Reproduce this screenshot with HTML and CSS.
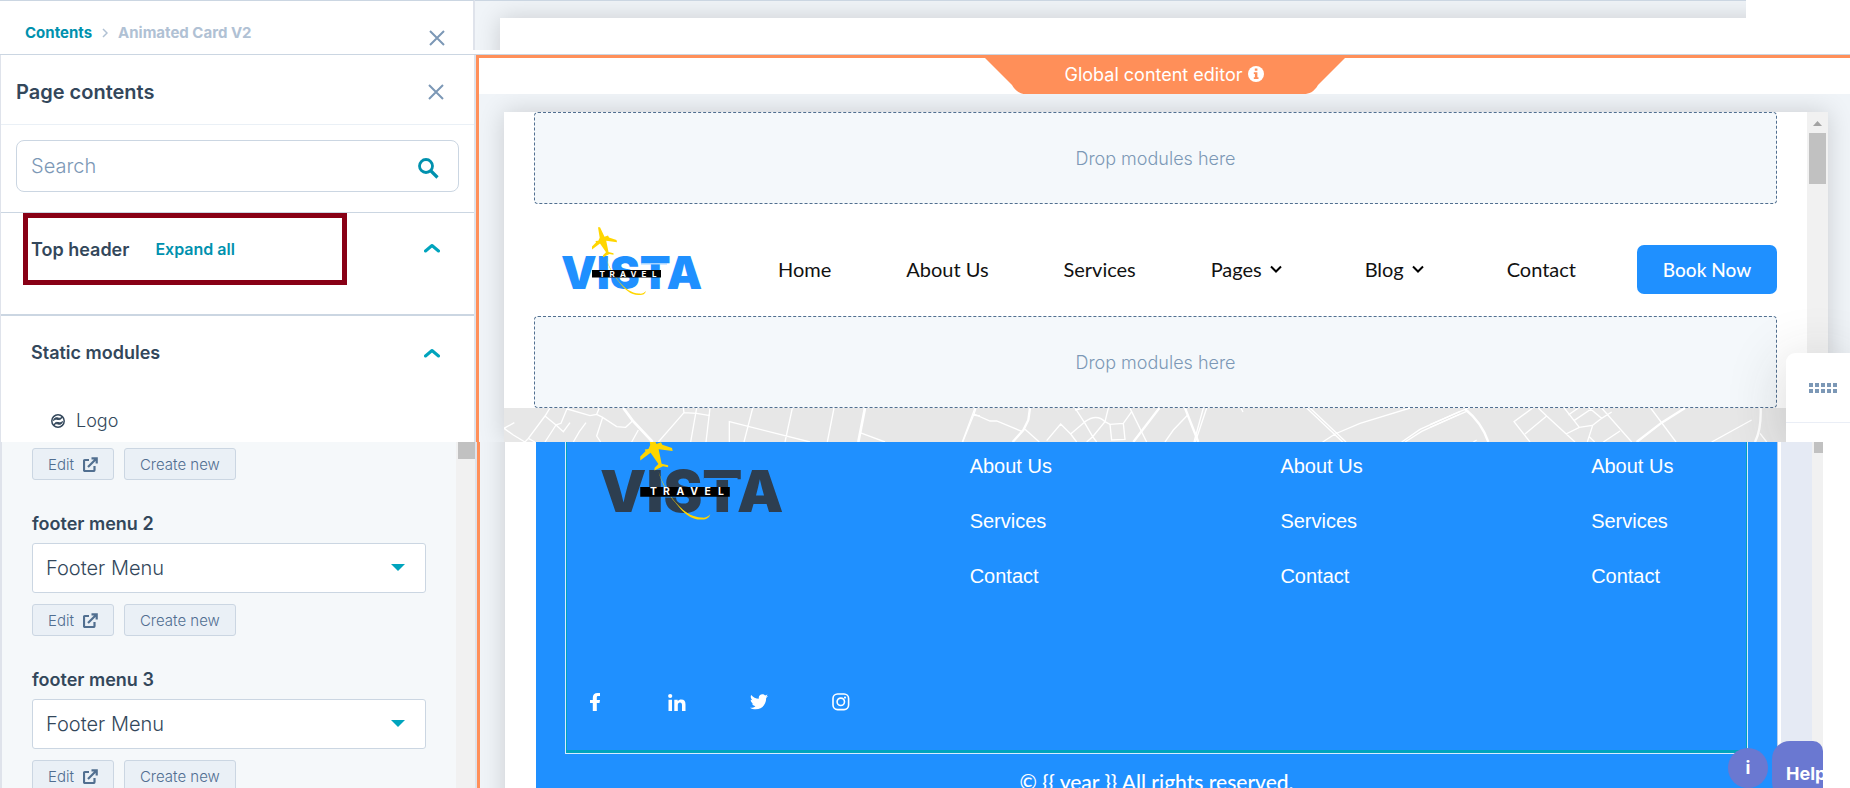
FILE: index.html
```html
<!DOCTYPE html>
<html lang="en">
<head>
<meta charset="utf-8">
<title>Global content editor</title>
<link rel="stylesheet" href="styles.css">
</head>
<body>
<svg class="defs" aria-hidden="true">
  <symbol id="close" viewBox="0 0 16 16"><path d="M1 1l14 14M15 1L1 15" stroke="#7c98b6" stroke-width="2" fill="none"/></symbol>
  <symbol id="up" viewBox="0 0 16 10"><path d="M1.500 8L8 2.500 14.500 8" stroke="#00a4bd" stroke-width="3" stroke-linecap="round" stroke-linejoin="round" fill="none"/></symbol>
  <symbol id="down" viewBox="0 0 12 8"><path d="M1 1.500l5 5 5-5" stroke="#000" stroke-width="2" fill="none"/></symbol>
  <symbol id="external" viewBox="0 0 15 15"><path d="M6 3H2a1 1 0 0 0-1 1v9a1 1 0 0 0 1 1h8.500a1 1 0 0 0 1-1V9M5 10L13 2M8.500 1.300h5.200v5.200" stroke="#516f90" stroke-width="2.200" fill="none"/></symbol>
  <symbol id="plane" viewBox="0 0 141 69">
    <path d="M45 31c3 10 7 17 13 24 6 8 13 14 21 13 3 0 5-1 6-4-2 2-4 3-7 2.500-8-.5-14-5-20-12-6-7-10-15-13-23.500z" fill="#ffd600"/>
    <path d="M37 .3h2L43.500 9.800l3.500-1.300 1 2 7.500 2.500.5 2.300-10.800-1.500L47.500 25l5 1.300v1.400l-4-.7-5 2.500-1.500.8v-2l3-3L39 16.500l-8 6v-3l4-4-.5-1.500 2.800-.3 1.400-3z" fill="#ffd600"/>
    <path d="M31 43h69v7.500H31z" fill="#000"/>
  </symbol>
</svg>

<section class="strip">
  <div class="crumb-panel">
    <nav class="crumbs" aria-label="Breadcrumb">
      <a href="#">Contents</a>
      <svg width="6" height="10" viewBox="0 0 6 10"><path d="M1 1l4 4-4 4" stroke="#b0c1d4" stroke-width="1.500" fill="none"/></svg>
      <span>Animated Card V2</span>
    </nav>
    <button class="icon-btn" aria-label="Close"><svg width="16" height="16"><use href="#close"/></svg></button>
  </div>
  <div class="strip-canvas"><div class="strip-page"></div></div>
</section>

<section class="editor">
  <aside class="panel">
    <header class="panel-head">
      <h1>Page contents</h1>
      <button class="icon-btn" aria-label="Close panel"><svg width="16" height="16"><use href="#close"/></svg></button>
    </header>
    <div class="search-row">
      <label class="search">
        <input type="text" placeholder="Search" aria-label="Search">
        <svg width="21" height="21" viewBox="0 0 21 21"><circle cx="8" cy="8" r="6.500" stroke="#0091ae" stroke-width="2.800" fill="none"/><path d="M13 13l6.500 6.500" stroke="#0091ae" stroke-width="3.200"/></svg>
      </label>
    </div>
    <div class="group">
      <div class="marked"><h2>Top header</h2><a href="#">Expand all</a></div>
      <button class="icon-btn" aria-label="Collapse top header"><svg width="16" height="10"><use href="#up"/></svg></button>
    </div>
    <div class="static">
      <div class="static-head">
        <h2>Static modules</h2>
        <button class="icon-btn" aria-label="Collapse static modules"><svg width="16" height="10"><use href="#up"/></svg></button>
      </div>
      <div class="module">
        <svg width="14" height="14" viewBox="0 0 14 14"><circle cx="7" cy="7" r="6.200" stroke="#33475b" stroke-width="1.500" fill="none"/><path d="M2.500 6.500C3 4 5 3.200 7 4c1.500.6 3 .2 4-1-.5 2-2 3-4 2.500-2-.5-3-.2-4.500 1zM11.500 7.500c-.5 2.500-2.500 3.300-4.500 2.500-1.500-.6-3-.2-4 1 .5-2 2-3 4-2.500 2 .5 3 .2 4.500-1z" fill="#33475b" stroke="#33475b"/></svg>
        <span>Logo</span>
      </div>
    </div>
  </aside>

  <div class="stage">
    <div class="toolbar">
      <div class="tab">
        <svg class="tab-shape" viewBox="0 0 360 36"><path d="M0 0h360L333 27c-4 7-9 9-14 9H41c-5 0-10-2-14-9z" fill="#ff8f59"/></svg>
        <span>Global content editor</span>
        <svg width="16" height="16" viewBox="0 0 16 16"><circle cx="8" cy="8" r="8" fill="#fff"/><path d="M6.800 2.500h2.600v2.300H6.800zM5.800 6.300h3.600v5h1.100V13H5.800v-1.700h1.100V8H5.800z" fill="#ff8f59"/></svg>
      </div>
    </div>
    <div class="canvas">
      <div class="page">
        <div class="page-body">
          <div class="drop">Drop modules here</div>
          <div class="site-head">
            <svg class="logo" viewBox="0 0 141 69" role="img" aria-label="Vista Travel">
              <text class="vista-word" x="0" y="62">VISTA</text>
              <path d="M80 36h26v1.500H80z" fill="#a5d3ff"/>
              <use href="#plane"/>
              <text class="travel-word" x="38.500 48.500 59 69.500 80.500 91" y="49.500">TRAVEL</text>
            </svg>
            <nav class="menu" aria-label="Site">
              <a href="#">Home</a><a href="#">About Us</a><a href="#">Services</a>
              <a href="#" class="has-sub">Pages <svg width="12" height="8"><use href="#down"/></svg></a>
              <a href="#" class="has-sub">Blog <svg width="12" height="8"><use href="#down"/></svg></a>
              <a href="#">Contact</a>
            </nav>
            <button class="book">Book Now</button>
          </div>
          <div class="drop">Drop modules here</div>
          <svg class="map" viewBox="0 0 1303 34" preserveAspectRatio="xMinYMin slice" aria-hidden="true">
            <g fill="none" stroke="#fff" stroke-width="4">
              <g transform="translate(-24 -108) scale(.33333)">
                <path d="M103 368L72 385l28 20 35 21M210 324l-15 24-50 67-10 11M145 415l20 11M195 348l33 27 22 20 20-27M228 375l-33 51M228 375l15-5 19-46M262 327l68 20 20-4 8-19M350 343l18 9 42 28 27 2 21-20M368 352l-18 56 12 18M318 368l-20 27-18 31M475 390l-20 36M610 324l2 14-77 88M612 338l38 2 40 7M650 324l-18 102M690 324l-12 102M748 426v-61l242 61M818 324l-26 102M937 324l-22 102M1062 324l-20 102M1140 398l75 28M1485 324l-38 102M1480 345l20 3"/>
                <path stroke-width="8" d="M430 324l28 38 60 64M1155 324l-20 102"/>
              </g>
              <g transform="translate(456 -18) scale(.33333)">
                <path d="M48 54l-6 18L8 156M42 72l48 21h20l75 31M195 118l43 38M260 152l42-50 30 30 18 24M332 132l43-37q35-25 60 0l15 8 40-3 25-35-5-11M345 54l30 46 23 40 12 16M445 54l-10 41-37 45-18 16M345 60l25-6M450 103l5 47 40-2-5-48M515 65l45 91M683 75l-43 45-25 36M740 54l-34 102M730 54l-28 102M1040 54l108 102M1050 54l108 102M1088 156l37-24 75-32 150-46M1325 156l55-38 120-54M1335 156l50-32 115-52M843 54l6 12"/>
                <path stroke-width="7" d="M210 54l-5 36-15 30-32 36M598 54l-78 102M675 54l40 102"/>
              </g>
              <g transform="translate(926 -108) scale(.33333)">
                <path d="M0 374l115-50M0 382l115-50M130 426l10-6M308 324l-56 41 48 61M325 324l25 24 85 78M350 348l-65 54M403 324l45 58 40-6-16 50M448 382l-40 20M432 362l56-38M415 345l30-21M478 324l37 31 30-19M515 324l90 102M488 376l27-21M570 393l-50 33M662 324l76 102M845 426l120-66M990 400l20 26M478 410l16 16"/>
                <path stroke-width="7" d="M105 327q50 40 70 99M765 324l-70 44-75 58M992 324q2 65-17 102"/>
              </g>
            </g>
          </svg>
        </div>
        <div class="track">
          <svg width="21" height="21" viewBox="0 0 21 21"><path d="M6 14l4.500-5 4.500 5z" fill="#a3a3a3"/></svg>
          <div class="thumb"></div>
        </div>
      </div>
      <div class="dock">
        <button class="dock-btn" aria-label="Drag handle"><svg width="28" height="10" viewBox="0 0 28 10"><path d="M0 2h28M0 8h28" stroke="#7c98b6" stroke-width="4" stroke-dasharray="4 2"/></svg></button>
      </div>
    </div>
  </div>
</section>

<section class="lower">
  <aside class="fields">
    <div class="fields-body">
      <div class="actions"><button>Edit <svg width="15" height="15"><use href="#external"/></svg></button><button>Create new</button></div>
      <div class="field">
        <label for="menu2">footer menu 2</label>
        <div class="select"><select id="menu2"><option>Footer Menu</option></select><svg width="14" height="7" viewBox="0 0 14 7"><path d="M0 0h14L7 7z" fill="#00a4bd"/></svg></div>
        <div class="actions"><button>Edit <svg width="15" height="15"><use href="#external"/></svg></button><button>Create new</button></div>
      </div>
      <div class="field">
        <label for="menu3">footer menu 3</label>
        <div class="select"><select id="menu3"><option>Footer Menu</option></select><svg width="14" height="7" viewBox="0 0 14 7"><path d="M0 0h14L7 7z" fill="#00a4bd"/></svg></div>
        <div class="actions"><button>Edit <svg width="15" height="15"><use href="#external"/></svg></button><button>Create new</button></div>
      </div>
    </div>
    <div class="fields-track"><div class="thumb"></div></div>
  </aside>
  <div class="lower-stage">
    <div class="lower-page">
      <footer class="site-foot">
        <div class="foot-box">
          <div class="foot-cols">
            <svg class="logo-big" viewBox="0 0 141 69" role="img" aria-label="Vista Travel">
              <text class="vista-word" x="0" y="62">VISTA</text>
              <path d="M80 36h26v1.500H80z" fill="#1f90ff"/>
              <use href="#plane"/>
              <text class="travel-word" x="38.500 48.500 59 69.500 80.500 91" y="49.500">TRAVEL</text>
            </svg>
            <nav aria-label="Footer 1"><a href="#">About Us</a><a href="#">Services</a><a href="#">Contact</a></nav>
            <nav aria-label="Footer 2"><a href="#">About Us</a><a href="#">Services</a><a href="#">Contact</a></nav>
            <nav aria-label="Footer 3"><a href="#">About Us</a><a href="#">Services</a><a href="#">Contact</a></nav>
          </div>
          <div class="social">
            <a href="#" aria-label="Facebook"><svg viewBox="0 0 20 20"><path d="M7.800 19v-8H5V8h2.800V6C7.800 2.500 9.500 1 12.500 1H15v3h-1.800C12 4 11.800 4.700 11.800 5.700V8H15l-.5 3h-2.700v8z"/></svg></a>
            <a href="#" aria-label="LinkedIn"><svg viewBox="0 0 20 20"><circle cx="3.200" cy="4" r="2.100"/><path d="M1.500 7.700H5V19H1.500zM7.300 7.700h3.400v1.500c.8-1.200 2-1.800 3.600-1.800 3 0 4.200 1.800 4.200 5V19H15v-6c0-1.700-.6-2.600-2-2.600s-2.200 1-2.200 2.700V19H7.300z"/></svg></a>
            <a href="#" aria-label="Twitter"><svg viewBox="0 0 512 512"><path d="M459 152c0 4 .3 9 .3 14 0 139-106 299-299 299-59 0-115-17-161-47 8 1 16 1 25 1 49 0 94-17 130-45-46-1-85-31-98-73 7 1 13 2 20 2 9 0 19-1 28-4-48-10-84-52-84-103v-1c14 8 30 13 47 13C39 178 21 145 21 108c0-20 5-38 14-53 52 64 129 105 216 110-2-8-3-16-3-24 0-58 47-105 105-105 30 0 58 13 77 33 24-5 46-13 67-25-8 24-24 45-46 58 21-2 42-8 60-16-14 21-32 39-52 54z"/></svg></a>
            <a href="#" aria-label="Instagram"><svg viewBox="0 0 20 20"><g fill="none" stroke="#fff" stroke-width="1.600"><rect x="2" y="2" width="15.600" height="15.600" rx="4.500"/><circle cx="9.800" cy="9.800" r="3.700"/></g><circle cx="14" cy="5.600" r="1.100"/></svg></a>
          </div>
        </div>
        <p>© {{ year }} All rights reserved.</p>
      </footer>
    </div>
    <div class="gutter"></div>
    <div class="lower-track"><div class="thumb"></div></div>
    <div class="helpers"><button class="info">i</button><button class="help">Help</button></div>
  </div>
  <div class="margin"></div>
</section>
</body>
</html>
```
FILE: styles.css
```css
* { box-sizing: border-box; }
body {
  margin: 0;
  height: 100vh;
  display: flex;
  flex-direction: column;
  overflow: hidden;
  background: #fff;
  color: #33475b;
  font-family: Inter, "Open Sans", sans-serif;
}
button, input, select { font: inherit; color: inherit; }
button { cursor: pointer; }
a { text-decoration: none; }
h1, h2, p { margin: 0; }
svg { display: block; flex: none; }
.defs { position: absolute; width: 0; height: 0; }
.icon-btn { display: flex; padding: 0; border: 0; background: none; }

.vista-word { font: 900 45px Inter, sans-serif; fill: currentColor; }
.travel-word { font: 700 8px Inter, sans-serif; fill: #fff; }

/* breadcrumb strip */
.strip { display: flex; height: 54px; padding-bottom: 4px; }
.crumb-panel {
  width: 475px;
  flex: none;
  display: flex;
  align-items: center;
  justify-content: space-between;
  padding: 14px 28px 0 25px;
  border-top: 1px solid #cbd6e2;
  border-right: 2px solid #dfe3eb;
}
.crumb-panel .icon-btn { padding-top: 11px; }
.crumbs { display: flex; align-items: center; gap: 10px; font-size: 15px; font-weight: 700; color: #b0c1d4; }
.crumbs a { color: #0091ae; }
.strip-canvas {
  flex: 1;
  margin-right: 104px;
  padding: 17px 0 0 25px;
  border-top: 1px solid #cbd6e2;
  background: #f0f4f8;
  overflow: hidden;
}
.strip-page { height: 60px; margin-right: -60px; background: #fff; box-shadow: 0 0 24px rgba(0, 0, 0, .16); }

/* editor */
.editor { display: flex; border-top: 1px solid #cbd6e2; }
.panel { width: 476px; flex: none; border-left: 1px solid #dfe3eb; border-right: 2px solid #dfe3eb; }
.panel-head {
  height: 70px;
  display: flex;
  align-items: center;
  justify-content: space-between;
  padding: 4px 30px 0 15px;
  border-bottom: 1px solid #eaf0f6;
}
.panel-head h1 { font-size: 20px; font-weight: 600; }
.search-row { padding: 15px 15px 20px; border-bottom: 1px solid #cbd6e2; }
.search {
  display: flex;
  align-items: center;
  height: 52px;
  padding: 0 19px 0 14px;
  border: 1px solid #cbd6e2;
  border-radius: 8px;
}
.search input { flex: 1; min-width: 0; padding: 0; border: 0; outline: 0; background: none; font-size: 20px; font-weight: 300; }
.search input::placeholder { color: #7c98b6; opacity: 1; }
.search svg { margin-top: 5px; }
.group {
  display: flex;
  align-items: flex-start;
  justify-content: space-between;
  padding: 0 34px 29px 22px;
  border-bottom: 2px solid #cbd6e2;
}
.group .icon-btn { margin-top: 30px; }
h2 { font-size: 18px; font-weight: 600; }
.marked {
  width: 324px;
  height: 72px;
  display: flex;
  align-items: center;
  gap: 26px;
  padding-left: 3px;
  border: 5px solid #880015;
}
.marked a { font-size: 16px; font-weight: 600; color: #0091ae; }
.static { padding: 26px 34px 10px 30px; }
.static-head { display: flex; align-items: center; justify-content: space-between; }
.module { display: flex; align-items: center; gap: 11px; padding: 47px 0 0 20px; font-size: 18px; line-height: 22px; font-weight: 300; }

.stage {
  flex: 1;
  min-width: 0;
  display: flex;
  flex-direction: column;
  border-top: 3px solid #ff8f59;
  border-left: 3px solid #ff8f59;
}
.toolbar { display: flex; justify-content: center; height: 36px; }
.tab {
  position: relative;
  width: 360px;
  height: 36px;
  display: flex;
  align-items: center;
  justify-content: center;
  gap: 6px;
  padding-bottom: 4px;
  color: #fff;
  font-size: 18px;
  font-weight: 400;
}
.tab > * { position: relative; }
.tab .tab-shape { position: absolute; inset: 0; width: 360px; height: 36px; }
.canvas { position: relative; flex: 1; padding: 18px 22px 0 25px; background: #f0f4f8; overflow: hidden; }
.page { display: flex; background: #fff; box-shadow: 0 0 24px rgba(0, 0, 0, .16); }
.page-body { flex: 1; min-width: 0; }
.drop {
  height: 92px;
  margin: 0 30px;
  display: flex;
  align-items: center;
  justify-content: center;
  border: 1px dashed #516f90;
  border-radius: 4px;
  background: #f4f8fb;
  color: #7c98b6;
  font-size: 18px;
  font-weight: 300;
}
.site-head { display: flex; align-items: center; height: 112px; padding: 18px 30px 0 57px; }
.logo { width: 141px; height: 69px; color: #1f90ff; margin-bottom: 16px; }
.menu { flex: 1; display: flex; justify-content: space-between; margin: 0 61px 0 76px; }
.menu a { display: flex; align-items: center; gap: 8px; color: #111; font: 400 20px/24px Lato, sans-serif; }
.has-sub { padding-right: 8px; }
.book { width: 140px; height: 49px; border: 0; border-radius: 7px; background: #1f90ff; color: #fff; font: 500 19px Lato, sans-serif; }
.map { width: 100%; height: 34px; background: #e7e7e7; }
.track { width: 21px; background: #f1f1f1; }
.thumb { background: #c1c1c1; }
.track .thumb { width: 17px; height: 51px; margin-left: 2px; }
.dock {
  position: absolute;
  right: 0;
  bottom: 0;
  width: 64px;
  height: 89px;
  border-top-left-radius: 9px;
  background: #fff;
  box-shadow: 0 10px 60px rgba(45, 45, 45, .2);
}
.dock-btn { display: flex; align-items: center; width: 100%; height: 70px; padding: 0 0 0 23px; border: 0; border-bottom: 1px solid #eaeef6; background: none; }

/* lower part */
.lower { flex: 1; min-height: 0; display: flex; overflow: hidden; }
.fields { width: 477px; flex: none; display: flex; border-left: 2px solid #dfe3eb; border-right: 2px solid #dfe3eb; background: #f5f8fa; }
.fields-body { flex: 1; padding: 6px 30px 0; }
.fields-track { width: 19px; padding-left: 2px; background: #f1f1f1; }
.fields-track .thumb { height: 17px; }
.actions { display: flex; gap: 10px; }
.actions button {
  height: 32px;
  display: flex;
  align-items: center;
  gap: 9px;
  padding: 0 15px;
  border: 1px solid #cbd6e2;
  border-radius: 3px;
  background: #eaf0f6;
  color: #506e91;
  font-size: 15px;
  font-weight: 300;
}
.field { margin-top: 34px; }
.field label { display: block; margin-bottom: 9px; font-size: 18px; line-height: 20px; font-weight: 600; }
.select { position: relative; margin-bottom: 11px; }
.select select {
  appearance: none;
  width: 100%;
  height: 50px;
  padding: 0 40px 0 13px;
  border: 1px solid #cbd6e2;
  border-radius: 3px;
  background: #fff;
  font-size: 20px;
  font-weight: 300;
}
.select svg { position: absolute; right: 21px; top: 21px; pointer-events: none; }

.lower-stage { position: relative; flex: 1; min-width: 0; display: flex; border-left: 3px solid #ff8f59; background: #f0f4f8; overflow: hidden; }
.lower-page { flex: 1; min-width: 0; margin: -30px 0 -30px 25px; padding: 30px 3px 30px 31px; background: #fff; box-shadow: 0 0 24px rgba(0, 0, 0, .16); }
.site-foot { height: 100%; padding: 0 29px; background: #1f90ff; border-right: 1px solid #b6cdea; }
.foot-box { height: 312px; display: flex; flex-direction: column; justify-content: space-between; border: 1px solid #d6eafe; border-top: 0; box-shadow: inset 1px 0 #00a4bd, inset -1px 0 #00a4bd, inset 0 -3px #00a4bd; }
.foot-cols { display: grid; grid-template-columns: 404fr 311fr 311fr 156fr; }
.logo-big { width: 183px; height: 90px; margin: -11px 0 0 34px; color: #2d3e50; }
.foot-cols nav { display: flex; flex-direction: column; gap: 31px; padding-top: 12px; }
.foot-cols a { color: #fff; font: 20px/24px "Liberation Sans", Arial, sans-serif; }
.social { display: flex; gap: 62px; padding: 0 0 41px 19px; }
.social svg { width: 20px; height: 20px; fill: #fff; }
.social a:nth-child(3) svg { padding: 1px; }
.site-foot p { margin-top: 15px; text-align: center; color: #fff; font: 500 21px/26px Lato, sans-serif; }
.gutter { z-index: 1; width: 31px; background: #e5eaf4; }
.lower-track { z-index: 1; width: 11px; padding-left: 2px; background: #f1f1f1; }
.lower-track .thumb { height: 11px; }
.helpers { position: absolute; z-index: 2; right: 0; bottom: -12px; display: flex; align-items: center; gap: 4px; color: #fff; }
.info { width: 40px; height: 40px; margin-bottom: 6px; padding: 0; border: 0; border-radius: 50%; background: #6a78d1; color: #fff; font-size: 18px; font-weight: 700; }
.help { width: 51px; height: 59px; padding: 6px 0 0 14px; border: 0; border-radius: 18px 10px 0 18px; background: #6a78d1; color: #fff; font-size: 18px; font-weight: 700; text-align: left; overflow: hidden; }
.margin { width: 27px; background: #fff; }
```
